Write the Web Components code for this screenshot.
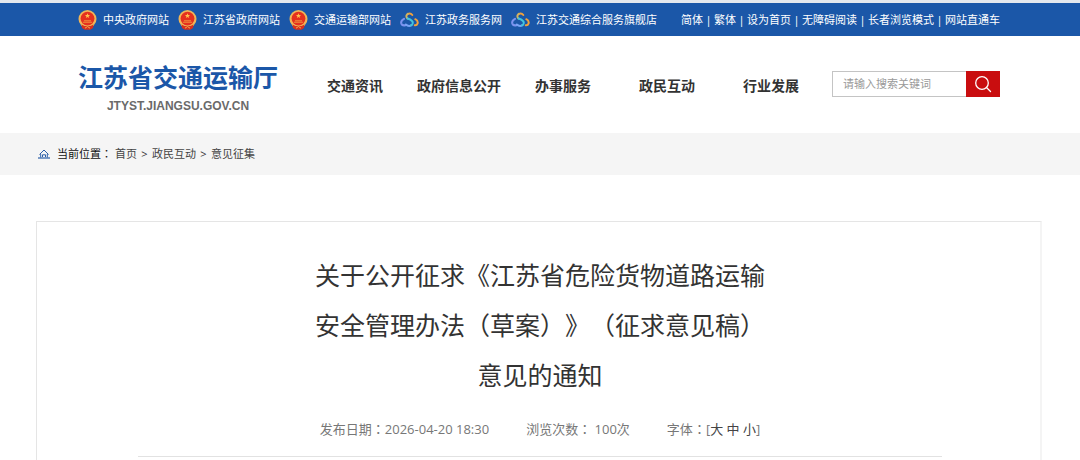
<!DOCTYPE html>
<html lang="zh-CN">
<head>
<meta charset="utf-8">
<title>意见征集 - 江苏省交通运输厅</title>
<style>
html, body { margin: 0; }
body {
  font-family: "Open Sans", "Noto Sans CJK SC", sans-serif;
  text-spacing-trim: space-all;
  color: #333;
  background: #fff;
  --blue: #1b57a8;
  --red: #c90d0f;
}
</style>
</head>
<body>
<notice-page></notice-page>

<template id="t-page">
  <style>
    :host { display: flex; flex-direction: column; min-height: 100vh; }
    notice-card { flex: 1; }
  </style>
  <top-bar>
    <site-link icon="emblem">中央政府网站</site-link>
    <site-link icon="emblem">江苏省政府网站</site-link>
    <site-link icon="emblem">交通运输部网站</site-link>
    <site-link icon="service">江苏政务服务网</site-link>
    <site-link icon="service">江苏交通综合服务旗舰店</site-link>
  </top-bar>
  <site-header></site-header>
  <bread-crumb></bread-crumb>
  <notice-card></notice-card>
</template>

<template id="t-top">
  <style>
    :host {
      display: flex; justify-content: space-between; box-sizing: border-box;
      min-height: 36px; padding: 0 80px 0 78px;
      border-top: 3px solid #e4e8ee; background: var(--blue);
      color: #fff; font-size: 11px; line-height: 16px; white-space: nowrap;
    }
    .sites { display: flex; align-items: center; gap: 9px; padding-top: 1px; }
    .tools { display: flex; align-items: center; }
    .tools a { color: inherit; text-decoration: none; }
    .tools span { width: 11px; text-align: center; }
  </style>
  <div class="sites"><slot></slot></div>
  <div class="tools">
    <a href="#">简体</a><span>|</span><a href="#">繁体</a><span>|</span><a href="#">设为首页</a><span>|</span><a href="#">无障碍阅读</a><span>|</span><a href="#">长者浏览模式</a><span>|</span><a href="#">网站直通车</a>
  </div>
</template>

<template id="t-link">
  <style>
    :host { display: block; }
    a { display: flex; align-items: center; gap: 6px; color: inherit; text-decoration: none; }
    svg { display: none; width: 19px; height: 20px; flex: none; }
    :host([icon="emblem"]) .emblem, :host([icon="service"]) .service { display: block; }
  </style>
  <a href="#">
    <svg class="emblem" viewBox="0 0 19 20" aria-hidden="true">
      <path d="M3 13h13l-1 5-2.500 1.500h-6L4 18z" fill="#d8301f"/>
      <circle cx="9.500" cy="9" r="9" fill="#f0b557"/>
      <circle cx="9.500" cy="8.600" r="6.900" fill="#e5301f"/>
      <path d="M9.500 3.200l.7 1.800h1.900l-1.500 1.200.6 1.900-1.700-1.100-1.700 1.100.6-1.900-1.500-1.200h1.900z" fill="#ffc14c"/>
      <path d="M6 10.300h7v.9h-7zM5 11.800h9v1h-9z" fill="#f08a3a"/>
      <path d="M3.500 14.500l3 1.500h6l3-1.500-.7 3-2.300 2h-6l-2.300-2z" fill="#d8301f"/>
      <path d="M7 18.200l2.500-1.700 2.500 1.700" fill="none" stroke="#f2b04a"/>
    </svg>
    <svg class="service" viewBox="0 0 19 20" aria-hidden="true" fill="none" stroke-linecap="round" stroke-width="2">
      <path d="M4 8.800Q.8 10.500 1.200 13.200 2 16 5.500 15.200" stroke="#7d94ef"/>
      <path d="M5.800 14.500Q8.500 17 11.500 15.200" stroke="#79a4f5"/>
      <path d="M12.300 5Q10.500 2.600 7.800 3.900" stroke="#f0a13c"/>
      <path d="M7.800 3.900Q5 6 7.500 8.500" stroke="#d4b35e"/>
      <path d="M7.500 8.500Q13 10.300 12.800 13 12.600 14.800 11 15.400" stroke="#43c6dc"/>
      <path d="M15.300 9.200Q18.300 10.800 17.600 13.400 16.800 15.600 14.800 15.300" stroke="#f3a23b"/>
    </svg>
    <slot></slot>
  </a>
</template>

<template id="t-header">
  <style>
    :host { display: flex; align-items: center; min-height: 97px; padding: 0 80px 0 78px; white-space: nowrap; }
    .logo { display: grid; gap: 8px; justify-items: center; color: inherit; text-decoration: none; padding-top: 6px; }
    .name { font-size: 25px; line-height: 28px; font-weight: 700; color: var(--blue); }
    .host { font: 700 12px/14px "Liberation Sans", sans-serif; color: #6a6a6a; }
    nav { flex: 1; display: flex; margin: 3px 9px 0 25px; }
    nav a { flex: 1 1 0; text-align: center; font-size: 14px; line-height: 20px; font-weight: 700; color: #333; text-decoration: none; }
  </style>
  <a class="logo" href="#"><span class="name">江苏省交通运输厅</span><span class="host">JTYST.JIANGSU.GOV.CN</span></a>
  <nav>
    <a href="#">交通资讯</a><a href="#">政府信息公开</a><a href="#">办事服务</a><a href="#">政民互动</a><a href="#">行业发展</a>
  </nav>
  <search-box></search-box>
</template>

<template id="t-search">
  <style>
    :host { display: block; }
    form { display: flex; width: 168px; height: 26px; margin: 0 0 2px; }
    input {
      flex: 1; min-width: 0; box-sizing: border-box; margin: 0; padding: 0 10px;
      border: 1px solid #c4c4c4; border-right: 0; border-radius: 0; background: #fff;
      font: inherit; font-size: 11px; color: #333; outline: 0;
    }
    input::placeholder { color: #999; opacity: 1; }
    button { display: grid; place-items: center; width: 34px; padding: 0; border: 0; background: var(--red); }
    svg { width: 18px; height: 18px; }
  </style>
  <form>
    <input type="text" placeholder="请输入搜索关键词" aria-label="搜索">
    <button type="button" aria-label="搜索">
      <svg viewBox="0 0 18 18" fill="none" stroke="#fff" stroke-width="1.300" stroke-linecap="round"><circle cx="8" cy="8" r="6.300"/><path d="M12.500 12.500l4 4"/></svg>
    </button>
  </form>
</template>

<template id="t-crumb">
  <style>
    :host {
      display: flex; align-items: center; box-sizing: border-box; min-height: 42px; padding: 0 38px;
      background: #f5f5f5; font-size: 11px; line-height: 16px; white-space: nowrap;
    }
    svg { width: 12px; height: 10px; margin-right: 7px; }
    .label { color: #111; margin-right: 3px; }
    a { color: #444; text-decoration: none; }
    .sep { width: 15px; text-align: center; }
    .mark { font-family: "Noto Sans CJK TC", sans-serif; line-height: 1; }
  </style>
  <svg viewBox="0 0 12 10" fill="none" stroke="#2c5fa8" aria-hidden="true"><path d="M1.500 5.500L6 1l4.500 4.500M2.700 5v3.500M9.300 5v3.500M4.500 8V5.800h3V8"/><path d="M0 9h12" stroke-width="1.200"/></svg>
  <span class="label">当前位置<span class="mark" lang="zh-TW">：</span></span>
  <a href="#">首页</a><span class="sep">&gt;</span><a href="#">政民互动</a><span class="sep">&gt;</span><a href="#">意见征集</a>
</template>

<template id="t-card">
  <style>
    :host {
      display: block; margin: 46px 38px 0 36px; padding: 28px 98px 0 101px;
      border: 1px solid #e5e5e5; border-right: 2px solid #f4f4f4; border-bottom: 0;
    }
    h1 { margin: 0 auto; width: max-content; max-width: 100%; font-size: 25px; line-height: 50px; font-weight: 400; text-align: center; color: #333; }
    .lead { display: block; text-align: left; }
    .mark { font-family: "Noto Sans CJK TC", sans-serif; line-height: 1; }
    .meta {
      display: flex; flex-wrap: wrap; justify-content: center; column-gap: 37px;
      padding: 19px 0 17px; border-bottom: 1px solid #e2e2e2;
      font-size: 13px; line-height: 20px; color: #777;
    }
    button { padding: 0; border: 0; background: none; font: inherit; line-height: 1; color: #444; }
  </style>
  <h1><span class="lead">关于公开征求《江苏省危险货物道路运输</span><span class="lead">安全管理办法<span class="mark" lang="zh-TW">（</span>草案<span class="mark" lang="zh-TW">）</span>》<span class="mark" lang="zh-TW">（</span>征求意见稿<span class="mark" lang="zh-TW">）</span></span>意见的通知</h1>
  <div class="meta">
    <span>发布日期<span class="mark" lang="zh-TW">：</span>2026-04-20 18:30</span>
    <span>浏览次数<span class="mark" lang="zh-TW">：</span> 100次</span>
    <span>字体<span class="mark" lang="zh-TW">：</span>[<button type="button">大</button> <button type="button">中</button> <button type="button">小</button>]</span>
  </div>
</template>

<script>
class Base extends HTMLElement {
  constructor() {
    super();
    this.attachShadow({ mode: "open" })
      .appendChild(document.getElementById(this.constructor.tpl).content.cloneNode(true));
  }
}
class SiteLink extends Base { static tpl = "t-link"; }
class TopBar extends Base { static tpl = "t-top"; }
class SearchBox extends Base { static tpl = "t-search"; }
class SiteHeader extends Base { static tpl = "t-header"; }
class BreadCrumb extends Base { static tpl = "t-crumb"; }
class NoticeCard extends Base { static tpl = "t-card"; }
class NoticePage extends Base { static tpl = "t-page"; }
customElements.define("site-link", SiteLink);
customElements.define("top-bar", TopBar);
customElements.define("search-box", SearchBox);
customElements.define("site-header", SiteHeader);
customElements.define("bread-crumb", BreadCrumb);
customElements.define("notice-card", NoticeCard);
customElements.define("notice-page", NoticePage);
</script>
</body>
</html>
